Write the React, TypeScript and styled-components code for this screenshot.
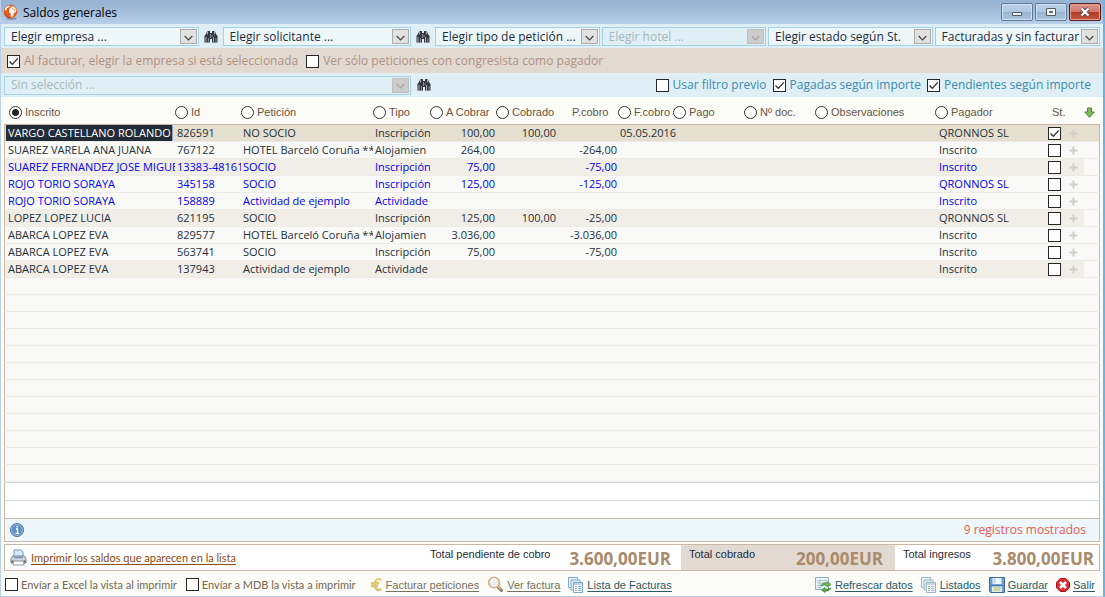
import React from 'react';
import styled, { createGlobalStyle, css } from 'styled-components';

const narrow = css`
  font-family: "Liberation Sans", Arial, sans-serif;
  font-size: 11px;
`;

const compact = css`
  font-family: Lato, "Liberation Sans", sans-serif;
  font-size: 11px;
`;

const Global = createGlobalStyle`
  * { box-sizing: border-box; }
  body {
    margin: 0;
    background: #fbfcf8;
    font-family: "Open Sans", "Noto Sans", sans-serif;
    font-size: 11px;
    line-height: 16px;
    color: #1f2a33;
  }
  button, input, select { font: inherit; margin: 0; }
`;

const Window = styled.main`
  display: flex;
  flex-direction: column;
  min-height: 100vh;
  border: solid #b9d1ea;
  border-width: 0 0 1px 1px;
  border-right: 2px solid #5fb8e4;
  background: #fbfcf8;
`;

const TitleBar = styled.header`
  display: flex;
  align-items: center;
  gap: 4px;
  height: 24px;
  padding: 0 2px;
  background: linear-gradient(#98b3d1 0, #9bb6d4 6px, #b8cfe9 100%);
`;

const Title = styled.h1`
  flex: 1;
  margin: 0;
  padding-top: 2px;
  font-size: 12px;
  line-height: 16px;
  font-weight: 400;
  color: #000;
`;

const WindowButtons = styled.div`
  display: flex;
  gap: 2px;
`;

const WindowButton = styled.button<{ $close?: boolean }>`
  display: flex;
  align-items: center;
  justify-content: center;
  width: 32px;
  height: 18px;
  padding: 0;
  border: 1px solid ${p => (p.$close ? '#5a1a1e' : '#5f7896')};
  border-radius: 2px;
  box-shadow: inset 0 0 0 1px ${p => (p.$close ? '#e0a095' : '#cfe0f2')};
  background: ${p =>
    p.$close
      ? 'linear-gradient(#dc9a8e 0, #cf7668 48%, #b43a25 50%, #c4573f 100%)'
      : 'linear-gradient(#bdd1e8 0, #b0c7e1 48%, #98b3d1 50%, #adc6e0 100%)'};
`;

const FilterBar = styled.section`
  display: grid;
  grid-template-columns: 194fr 20px 188fr 20px 164fr 164fr 164fr 165fr;
  align-items: center;
  column-gap: 2px;
  height: 24px;
  padding: 1px 3px 0;
  background: #dfeff5;
`;

const SecondBar = styled.section`
  display: flex;
  align-items: center;
  gap: 6px;
  height: 24px;
  padding: 0 12px 0 3px;
  background: #dfeff5;
`;

const OptionBar = styled.section`
  display: flex;
  align-items: center;
  gap: 8px;
  height: 25px;
  padding: 1px 6px 0;
  background: #e2d9d1;
  color: #b09284;
`;

const Combo = styled.span<{ $grow?: boolean }>`
  position: relative;
  display: flex;
  min-width: 0;
  ${p => p.$grow && css`flex: 0 1 407px;`}
`;

const Select = styled.select`
  appearance: none;
  width: 100%;
  height: 19px;
  padding: 0 19px 0 6px;
  border: 1px solid #a5d3e3;
  border-radius: 0;
  background: #edf7fa;
  color: #1f2a3a;
  font-size: 12px;
  &:disabled { background: #dfeff5; color: #a5b8bc; opacity: 1; }
`;

const ComboArrow = styled.span<{ $off?: boolean }>`
  position: absolute;
  top: 2px;
  right: 2px;
  display: flex;
  align-items: center;
  justify-content: center;
  width: 17px;
  height: 15px;
  padding-top: 2px;
  border: 1px solid ${p => (p.$off ? '#bfbfbf' : '#adadad')};
  background: ${p => (p.$off ? '#cccccc' : '#e1e1e1')};
  color: ${p => (p.$off ? '#a3a3a3' : '#444')};
  pointer-events: none;
`;

const IconButton = styled.button`
  display: flex;
  align-items: center;
  justify-content: center;
  padding: 0;
  border: 0;
  background: none;
`;

const Check = styled.input.attrs({ type: 'checkbox' })`
  appearance: none;
  flex: none;
  width: 13px;
  height: 13px;
  border: 1px solid #262626;
  background: #fff;
  &:checked {
    background: #fff url("data:image/svg+xml,%3Csvg xmlns='http://www.w3.org/2000/svg' width='11' height='11'%3E%3Cpath d='M1.5 5.5l2.8 2.8L9.8 2.4' fill='none' stroke='%23333' stroke-width='1.3'/%3E%3C/svg%3E");
  }
`;

const Radio = styled.input.attrs({ type: 'radio' })`
  appearance: none;
  flex: none;
  width: 13px;
  height: 13px;
  border: 1px solid #333;
  border-radius: 50%;
  background: #fff;
  &:checked { background: radial-gradient(circle, #222 3px, #fff 4px); }
`;

const CheckLabel = styled.label<{ $tone?: string; $small?: boolean }>`
  display: flex;
  align-items: center;
  gap: ${p => (p.$small ? 3 : 4)}px;
  white-space: nowrap;
  font-size: 12px;
  color: ${p => p.$tone ?? 'inherit'};
  ${p => p.$small && compact}
`;

const Spacer = styled.span`flex: 1;`;

const Content = styled.div`
  padding: 0 3px;
`;

const Grid = styled.table`
  width: 100%;
  table-layout: fixed;
  border-collapse: separate;
  border-spacing: 0;
`;

const HeadCell = styled.th`
  ${narrow}
  height: 28px;
  padding: 3px 0 0;
  border-bottom: 1px solid #c9b8a6;
  font-weight: 400;
  text-align: left;
  white-space: nowrap;
  color: #69543f;
`;

const HeadLabel = styled.label<{ $indent?: number }>`
  display: flex;
  align-items: center;
  gap: 3px;
  padding-left: ${p => p.$indent ?? 0}px;
`;

const Cell = styled.td<{ $right?: boolean; $spill?: boolean; $inset?: number }>`
  height: 17px;
  padding: 0 1px 0 ${p => p.$inset ?? 2}px;
  border-bottom: 1px solid #edebe6;
  line-height: 16px;
  white-space: nowrap;
  overflow: ${p => (p.$spill ? 'visible' : 'hidden')};
  text-align: ${p => (p.$right ? 'right' : 'left')};
`;

const Row = styled.tr<{ $shade: 'selected' | 'band' | 'plain'; $blue?: boolean }>`
  color: ${p => (p.$blue ? '#0000f0' : '#26303a')};
  ${Cell} {
    background: ${p => ({ selected: '#e5dfcf', band: '#f1ede7', plain: '#f9f9f7' })[p.$shade]};
  }
  ${Cell}:first-child { border-left: 1px solid #c9b8a6; }
  ${Cell}:last-child {
    border-right: 1px solid #c9b8a6;
    ${p => p.$shade === 'band' && css`background: #f9f9f7;`}
  }
`;

const Selected = styled.span`
  display: block;
  width: 167px;
  margin-left: -2px;
  padding-left: 2px;
  border: solid #8fa3bd;
  border-width: 0 1px 0 0;
  background: #232c36;
  color: #fff;
`;

const Center = styled.span`
  display: flex;
  align-items: center;
  height: 16px;
`;

const BlankLine = styled.div`
  height: 18px;
  border: solid #c9b8a6;
  border-width: 0 1px;
  border-top: 1px solid #d2dbe6;
  background: #fff;
`;

const StatusBar = styled.div`
  display: flex;
  align-items: center;
  justify-content: space-between;
  height: 24px;
  padding: 0 13px 0 4px;
  border: 1px solid #c9b8a6;
  background: #eef7fb;
  color: #f0584a;
  font-size: 12px;
`;

const Totals = styled.section`
  ${narrow}
  display: flex;
  height: 27px;
  margin-top: 2px;
  border: 1px solid #c9b8a6;
  background: #fff;
`;

const PrintArea = styled.div`
  ${compact}
  display: flex;
  flex: 1;
  align-items: center;
  gap: 4px;
  padding-left: 5px;
`;

const Total = styled.div<{ $width: number; $shade?: boolean; $end: number }>`
  display: flex;
  justify-content: space-between;
  width: ${p => p.$width}px;
  padding: 1px ${p => p.$end}px 0 8px;
  background: ${p => (p.$shade ? '#e2d9d1' : 'transparent')};
  color: #1f2a3a;
`;

const Amount = styled.strong`
  padding-top: 2px;
  font-family: "Open Sans", "Noto Sans", sans-serif;
  font-size: 17px;
  line-height: 22px;
  color: #a98a6b;
`;

const Footer = styled.footer`
  ${narrow}
  display: flex;
  align-items: center;
  gap: 8px;
  height: 25px;
  padding: 2px 8px 0 4px;
  color: #75664f;
`;

const ExportOptions = styled.div`
  display: flex;
  gap: 9px;
  margin-right: 6px;
`;

const Action = styled.span`
  display: flex;
  align-items: center;
  gap: 3px;
`;

const Link = styled.a<{ $tone?: string }>`
  color: ${p => p.$tone ?? '#2c5a68'};
  white-space: nowrap;
  text-decoration: underline;
  text-underline-offset: 2px;
`;

const Globe = () => (
  <svg width="16" height="16" viewBox="0 0 16 16" aria-hidden="true">
    <ellipse cx="8.500" cy="14.500" rx="5" ry="1.200" fill="#7d8fa6" />
    <circle cx="7.500" cy="7.500" r="6.800" fill="#e8591c" />
    <path d="M2 4.500Q3.500 2 6 1.500L7 2.300 5.500 3.500l-1.500.5-.5 2-1.800 1zM6 5.500L7.500 3.500 9.500 2l2.500 1.500 1.500 2.500-1 2.500-1.500.5-.8 3-1.700 1.500-1-1.500.3-2.500-1.800-1z" fill="#fff4ea" />
    <path d="M9 4.500l1.500 1M11.500 5l.5 1.500" stroke="#e8591c" strokeWidth=".8" />
    <path d="M1.500 10q2 3.500 5.500 4" fill="none" stroke="#b93a0c" />
  </svg>
);

const Binoculars = () => (
  <svg width="14" height="14" viewBox="0 0 14 14" aria-hidden="true">
    <path d="M2.500 2.500L4 1h2v2h2V1h2l1.500 1.500L12 4l1.500 2v6.500H8V9H6v3.500H.5V6L2 4z" fill="#33383e" />
    <path d="M3.500 2v2.500M10.500 2v2.500M2 7v5M9.500 7v5" stroke="#a7adb5" />
    <path d="M6.500 4v4M4.500 8v4M12 8v4M8 5v2" stroke="#858d96" />
  </svg>
);

const Chevron = () => (
  <svg width="9" height="6" viewBox="0 0 9 6" aria-hidden="true">
    <path d="M.7 1l3.800 3.800L8.300 1" fill="none" stroke="currentColor" strokeWidth="1.2" />
  </svg>
);

const GreenArrow = () => (
  <svg width="11" height="11" viewBox="0 0 11 11" aria-hidden="true">
    <path d="M3.500 1h4v4h2.800L5.500 10.300.7 5h2.800z" fill="#7db85a" stroke="#55803f" />
  </svg>
);

const Plus = () => (
  <svg width="9" height="9" viewBox="0 0 9 9" aria-hidden="true">
    <path d="M4.500.5v8M.5 4.500h8" stroke="#d0d0d0" strokeWidth="2" />
  </svg>
);

const Info = () => (
  <svg width="16" height="16" viewBox="0 0 16 16" aria-hidden="true">
    <circle cx="8" cy="8" r="6.500" fill="#5f8fc7" stroke="#4f7099" />
    <circle cx="8" cy="8" r="5.500" fill="none" stroke="#a9c6e6" strokeWidth=".8" />
    <path d="M7 7h1.500v4M6.500 11.300h3.500M7.400 4.700h1.500" fill="none" stroke="#fff" strokeWidth="1.3" />
  </svg>
);

const Printer = () => (
  <svg width="17" height="17" viewBox="0 0 17 17" aria-hidden="true">
    <path d="M4 8V1h7l2 2v5z" fill="#d9ebfb" stroke="#6f9cc8" />
    <path d="M2.500 7h12L16 10v4H1v-4z" fill="#d4d7da" stroke="#7d858c" />
    <path d="M4 8.500h9" stroke="#6f93b8" strokeWidth="1.500" />
    <path d="M1.500 12.500h2M13.500 12.500h2" stroke="#555d66" strokeWidth="2" />
    <path d="M3.500 12h10l.5 4H3z" fill="#fff" stroke="#8b949c" />
  </svg>
);

const Euro = () => (
  <svg width="13" height="15" viewBox="0 0 13 15" aria-hidden="true">
    <path d="M11.500 3.200Q8.500.7 6 3.500T5.500 11q2.500 3.500 6 1M1 6.300h8M1 9h7" fill="none" stroke="#dcc573" strokeWidth="2.400" />
    <path d="M11 2.800Q8 1.200 6 3.800" fill="none" stroke="#f3e3a0" />
  </svg>
);

const Magnifier = () => (
  <svg width="17" height="17" viewBox="0 0 17 17" aria-hidden="true">
    <path d="M11 11l3.500 3.500" stroke="#8a7360" strokeWidth="3" strokeLinecap="round" />
    <path d="M11 10.500l3 3" stroke="#d9b98c" strokeWidth="1.200" />
    <circle cx="7" cy="6.500" r="5.300" fill="#eaf0f5" stroke="#d6ae7d" strokeWidth="1.600" />
    <path d="M4 6q.5-2.500 3-3" fill="none" stroke="#fff" strokeWidth="1.300" />
  </svg>
);

const Sheets = ({ tone = '#7fa9c6' }: { tone?: string }) => (
  <svg width="16" height="16" viewBox="0 0 16 16" aria-hidden="true">
    <path d="M.5.5h9v10h-9z" fill="#e9f3fa" stroke={tone} />
    <path d="M3 3h9v10H3z" fill="#dcecf6" stroke={tone} />
    <path d="M5.500 5.500h9v10h-9z" fill="#f6fbfe" stroke={tone} />
    <path d="M6 7h8" stroke={tone} />
    <path d="M7 9.500h2M7 11.500h2M7 13.500h2" stroke="#8db79a" />
    <path d="M10 9.500h3.500M10 11.500h3.500M10 13.500h3.500" stroke={tone} />
  </svg>
);

const Refresh = () => (
  <svg width="17" height="16" viewBox="0 0 17 16" aria-hidden="true">
    <path d="M.5.5h13v12H.5z" fill="#eef5f8" stroke="#8fb0bd" />
    <path d="M2 3.500h10M2 6h10M2 8.500h5M2 10.500h4M5 2v10" stroke="#a9c4cf" />
    <path d="M6 9q1.500-4 6-3V4.500l4 3-4 2.500V8.500q-3-1-6 .5z" fill="#74b362" stroke="#4b8a40" strokeWidth=".7" />
    <path d="M16 11q-2 4-6 3v1.500L6.500 13l3.500-2.500V12q3 .8 6-1z" fill="#5fa04e" stroke="#3d7f31" strokeWidth=".7" />
  </svg>
);

const Disk = () => (
  <svg width="16" height="16" viewBox="0 0 16 16" aria-hidden="true">
    <path d="M.5.5h15v15h-14l-1-1z" fill="#6f9fd6" stroke="#3f689c" />
    <path d="M3.500 1h9v6h-9z" fill="#eef5fb" />
    <path d="M4.500 1.500h2v5h-2z" fill="#b9d0e8" />
    <path d="M3 9.500h10V15H3z" fill="#e6eed8" />
    <path d="M4.500 11h7M4.500 13h7" stroke="#9fbf7d" />
    <path d="M1.500 8.500h13" stroke="#4a77ae" />
  </svg>
);

const Exit = () => (
  <svg width="14" height="14" viewBox="0 0 14 14" aria-hidden="true">
    <path d="M4.300.5h5.400l3.800 3.800v5.400l-3.800 3.800H4.300L.5 9.700V4.300z" fill="#dc2a30" stroke="#a3151b" />
    <path d="M4 4l6 6M10 4l-6 6" stroke="#fff" strokeWidth="2.600" />
  </svg>
);

function Picker({ text, off, grow }: { text: string; off?: boolean; grow?: boolean }) {
  return (
    <Combo $grow={grow}>
      <Select aria-label={text} disabled={off}>
        <option>{text}</option>
      </Select>
      <ComboArrow $off={off}><Chevron /></ComboArrow>
    </Combo>
  );
}

type Entry = {
  name: string; id: string; request: string; kind: string;
  due?: string; paid?: string; pending?: string; date?: string;
  payer: string; blue?: boolean;
};

const entries: Entry[] = [
  { name: 'VARGO CASTELLANO ROLANDO', id: '826591', request: 'NO SOCIO', kind: 'Inscripción', due: '100,00', paid: '100,00', date: '05.05.2016', payer: 'QRONNOS SL' },
  { name: 'SUAREZ VARELA ANA JUANA', id: '767122', request: 'HOTEL Barceló Coruña **', kind: 'Alojamien', due: '264,00', pending: '-264,00', payer: 'Inscrito' },
  { name: 'SUAREZ FERNANDEZ JOSE MIGUE', id: '13383-48161', request: 'SOCIO', kind: 'Inscripción', due: '75,00', pending: '-75,00', payer: 'Inscrito', blue: true },
  { name: 'ROJO TORIO SORAYA', id: '345158', request: 'SOCIO', kind: 'Inscripción', due: '125,00', pending: '-125,00', payer: 'QRONNOS SL', blue: true },
  { name: 'ROJO TORIO SORAYA', id: '158889', request: 'Actividad de ejemplo', kind: 'Actividade', payer: 'Inscrito', blue: true },
  { name: 'LOPEZ LOPEZ LUCIA', id: '621195', request: 'SOCIO', kind: 'Inscripción', due: '125,00', paid: '100,00', pending: '-25,00', payer: 'QRONNOS SL' },
  { name: 'ABARCA LOPEZ EVA', id: '829577', request: 'HOTEL Barceló Coruña **', kind: 'Alojamien', due: '3.036,00', pending: '-3.036,00', payer: 'Inscrito' },
  { name: 'ABARCA LOPEZ EVA', id: '563741', request: 'SOCIO', kind: 'Inscripción', due: '75,00', pending: '-75,00', payer: 'Inscrito' },
  { name: 'ABARCA LOPEZ EVA', id: '137943', request: 'Actividad de ejemplo', kind: 'Actividade', payer: 'Inscrito' },
];

const widths = [171, 66, 132, 57, 66, 61, 61, 55, 71, 71, undefined, 110, 22, 17, 16];

const heads = ['Inscrito', 'Id', 'Petición', 'Tipo', 'A Cobrar', 'Cobrado', 'P.cobro', 'F.cobro', 'Pago', 'Nº doc.', 'Observaciones', 'Pagador'];

const emptyRows = Array.from({ length: 12 }, (_, i) => i);

export default function App() {
  return (
    <>
      <Global />
      <Window>
        <TitleBar>
          <Globe />
          <Title>Saldos generales</Title>
          <WindowButtons>
            <WindowButton aria-label="Minimizar">
              <svg width="12" height="10"><path d="M1.500 5.500h9v3h-9z" fill="#f3f3ee" stroke="#535d6b" /></svg>
            </WindowButton>
            <WindowButton aria-label="Maximizar">
              <svg width="12" height="10"><path d="M1.500 1.500h9v7h-9z" fill="#f3f3ee" stroke="#535d6b" /><path d="M4.500 4.500h3v1h-3z" fill="#9bb6d4" stroke="#535d6b" /></svg>
            </WindowButton>
            <WindowButton $close aria-label="Cerrar">
              <svg width="12" height="10"><path d="M2.500 1.500l7 7M9.500 1.500l-7 7" stroke="#5b4a50" strokeWidth="4" /><path d="M2.500 1.500l7 7M9.500 1.500l-7 7" stroke="#fff" strokeWidth="2.200" /></svg>
            </WindowButton>
          </WindowButtons>
        </TitleBar>

        <FilterBar>
          <Picker text="Elegir empresa ..." />
          <IconButton aria-label="Buscar empresa"><Binoculars /></IconButton>
          <Picker text="Elegir solicitante ..." />
          <IconButton aria-label="Buscar solicitante"><Binoculars /></IconButton>
          <Picker text="Elegir tipo de petición ..." />
          <Picker text="Elegir hotel ..." off />
          <Picker text="Elegir estado según St." />
          <Picker text="Facturadas y sin facturar ..." />
        </FilterBar>

        <OptionBar>
          <CheckLabel><Check defaultChecked />Al facturar, elegir la empresa si está seleccionada</CheckLabel>
          <CheckLabel><Check />Ver sólo peticiones con congresista como pagador</CheckLabel>
        </OptionBar>

        <SecondBar>
          <Picker text="Sin selección ..." off grow />
          <IconButton aria-label="Buscar"><Binoculars /></IconButton>
          <Spacer />
          <CheckLabel $tone="#3b8bb0"><Check />Usar filtro previo</CheckLabel>
          <CheckLabel $tone="#3b8bb0"><Check defaultChecked />Pagadas según importe</CheckLabel>
          <CheckLabel $tone="#3b8bb0"><Check defaultChecked />Pendientes según importe</CheckLabel>
        </SecondBar>

        <Content>
          <Grid>
            <colgroup>
              {widths.map((w, i) => <col key={i} width={w} />)}
            </colgroup>
            <thead>
              <tr>
                {heads.map((h, i) => (
                  <HeadCell key={h}>
                    {h === 'P.cobro'
                      ? <HeadLabel as="span" $indent={15}>{h}</HeadLabel>
                      : <HeadLabel $indent={i === 0 ? 5 : 0}><Radio name="orden" defaultChecked={i === 0} />{h}</HeadLabel>}
                  </HeadCell>
                ))}
                <HeadCell><HeadLabel as="span" $indent={7}>St.</HeadLabel></HeadCell>
                <HeadCell />
                <HeadCell><IconButton aria-label="Bajar"><GreenArrow /></IconButton></HeadCell>
              </tr>
            </thead>
            <tbody>
              {entries.map((e, i) => (
                <Row key={i} $shade={i === 0 ? 'selected' : [2, 5, 8].includes(i) ? 'band' : 'plain'} $blue={e.blue}>
                  <Cell $inset={3}>{i === 0 ? <Selected>{e.name}</Selected> : e.name}</Cell>
                  <Cell>{e.id}</Cell>
                  <Cell>{e.request}</Cell>
                  <Cell>{e.kind}</Cell>
                  <Cell $right>{e.due}</Cell>
                  <Cell $right>{e.paid}</Cell>
                  <Cell $right>{e.pending}</Cell>
                  <Cell $spill>{e.date}</Cell>
                  <Cell />
                  <Cell />
                  <Cell />
                  <Cell $inset={4}>{e.payer}</Cell>
                  <Cell $inset={3}><Center><Check aria-label={`St. ${e.id}`} defaultChecked={i === 0} /></Center></Cell>
                  <Cell><Center><Plus /></Center></Cell>
                  <Cell />
                </Row>
              ))}
              {emptyRows.map(i => (
                <Row key={`empty-${i}`} $shade="plain"><Cell colSpan={15} /></Row>
              ))}
            </tbody>
          </Grid>
          <BlankLine />
          <BlankLine />
          <StatusBar><Info /><span>9 registros mostrados</span></StatusBar>

          <Totals>
            <PrintArea><Printer /><Link href="#imprimir" $tone="#8f4a10">Imprimir los saldos que aparecen en la lista</Link></PrintArea>
            <Total $width={259} $end={10}><span>Total pendiente de cobro</span><Amount>3.600,00EUR</Amount></Total>
            <Total $width={214} $end={12} $shade><span>Total cobrado</span><Amount>200,00EUR</Amount></Total>
            <Total $width={204} $end={5}><span>Total ingresos</span><Amount>3.800,00EUR</Amount></Total>
          </Totals>
        </Content>

        <Footer>
          <ExportOptions>
            <CheckLabel $small><Check />Envíar a Excel la vista al imprimir</CheckLabel>
            <CheckLabel $small><Check />Envíar a MDB la vista a imprimir</CheckLabel>
          </ExportOptions>
          <Action><Euro /><Link href="#facturar" $tone="#75735f">Facturar peticiones</Link></Action>
          <Action><Magnifier /><Link href="#ver" $tone="#75735f">Ver factura</Link></Action>
          <Action><Sheets /><Link href="#facturas">Lista de Facturas</Link></Action>
          <Spacer />
          <Action><Refresh /><Link href="#refrescar">Refrescar datos</Link></Action>
          <Action><Sheets tone="#9db6bf" /><Link href="#listados">Listados</Link></Action>
          <Action><Disk /><Link href="#guardar">Guardar</Link></Action>
          <Action><Exit /><Link href="#salir">Salir</Link></Action>
        </Footer>
      </Window>
    </>
  );
}
